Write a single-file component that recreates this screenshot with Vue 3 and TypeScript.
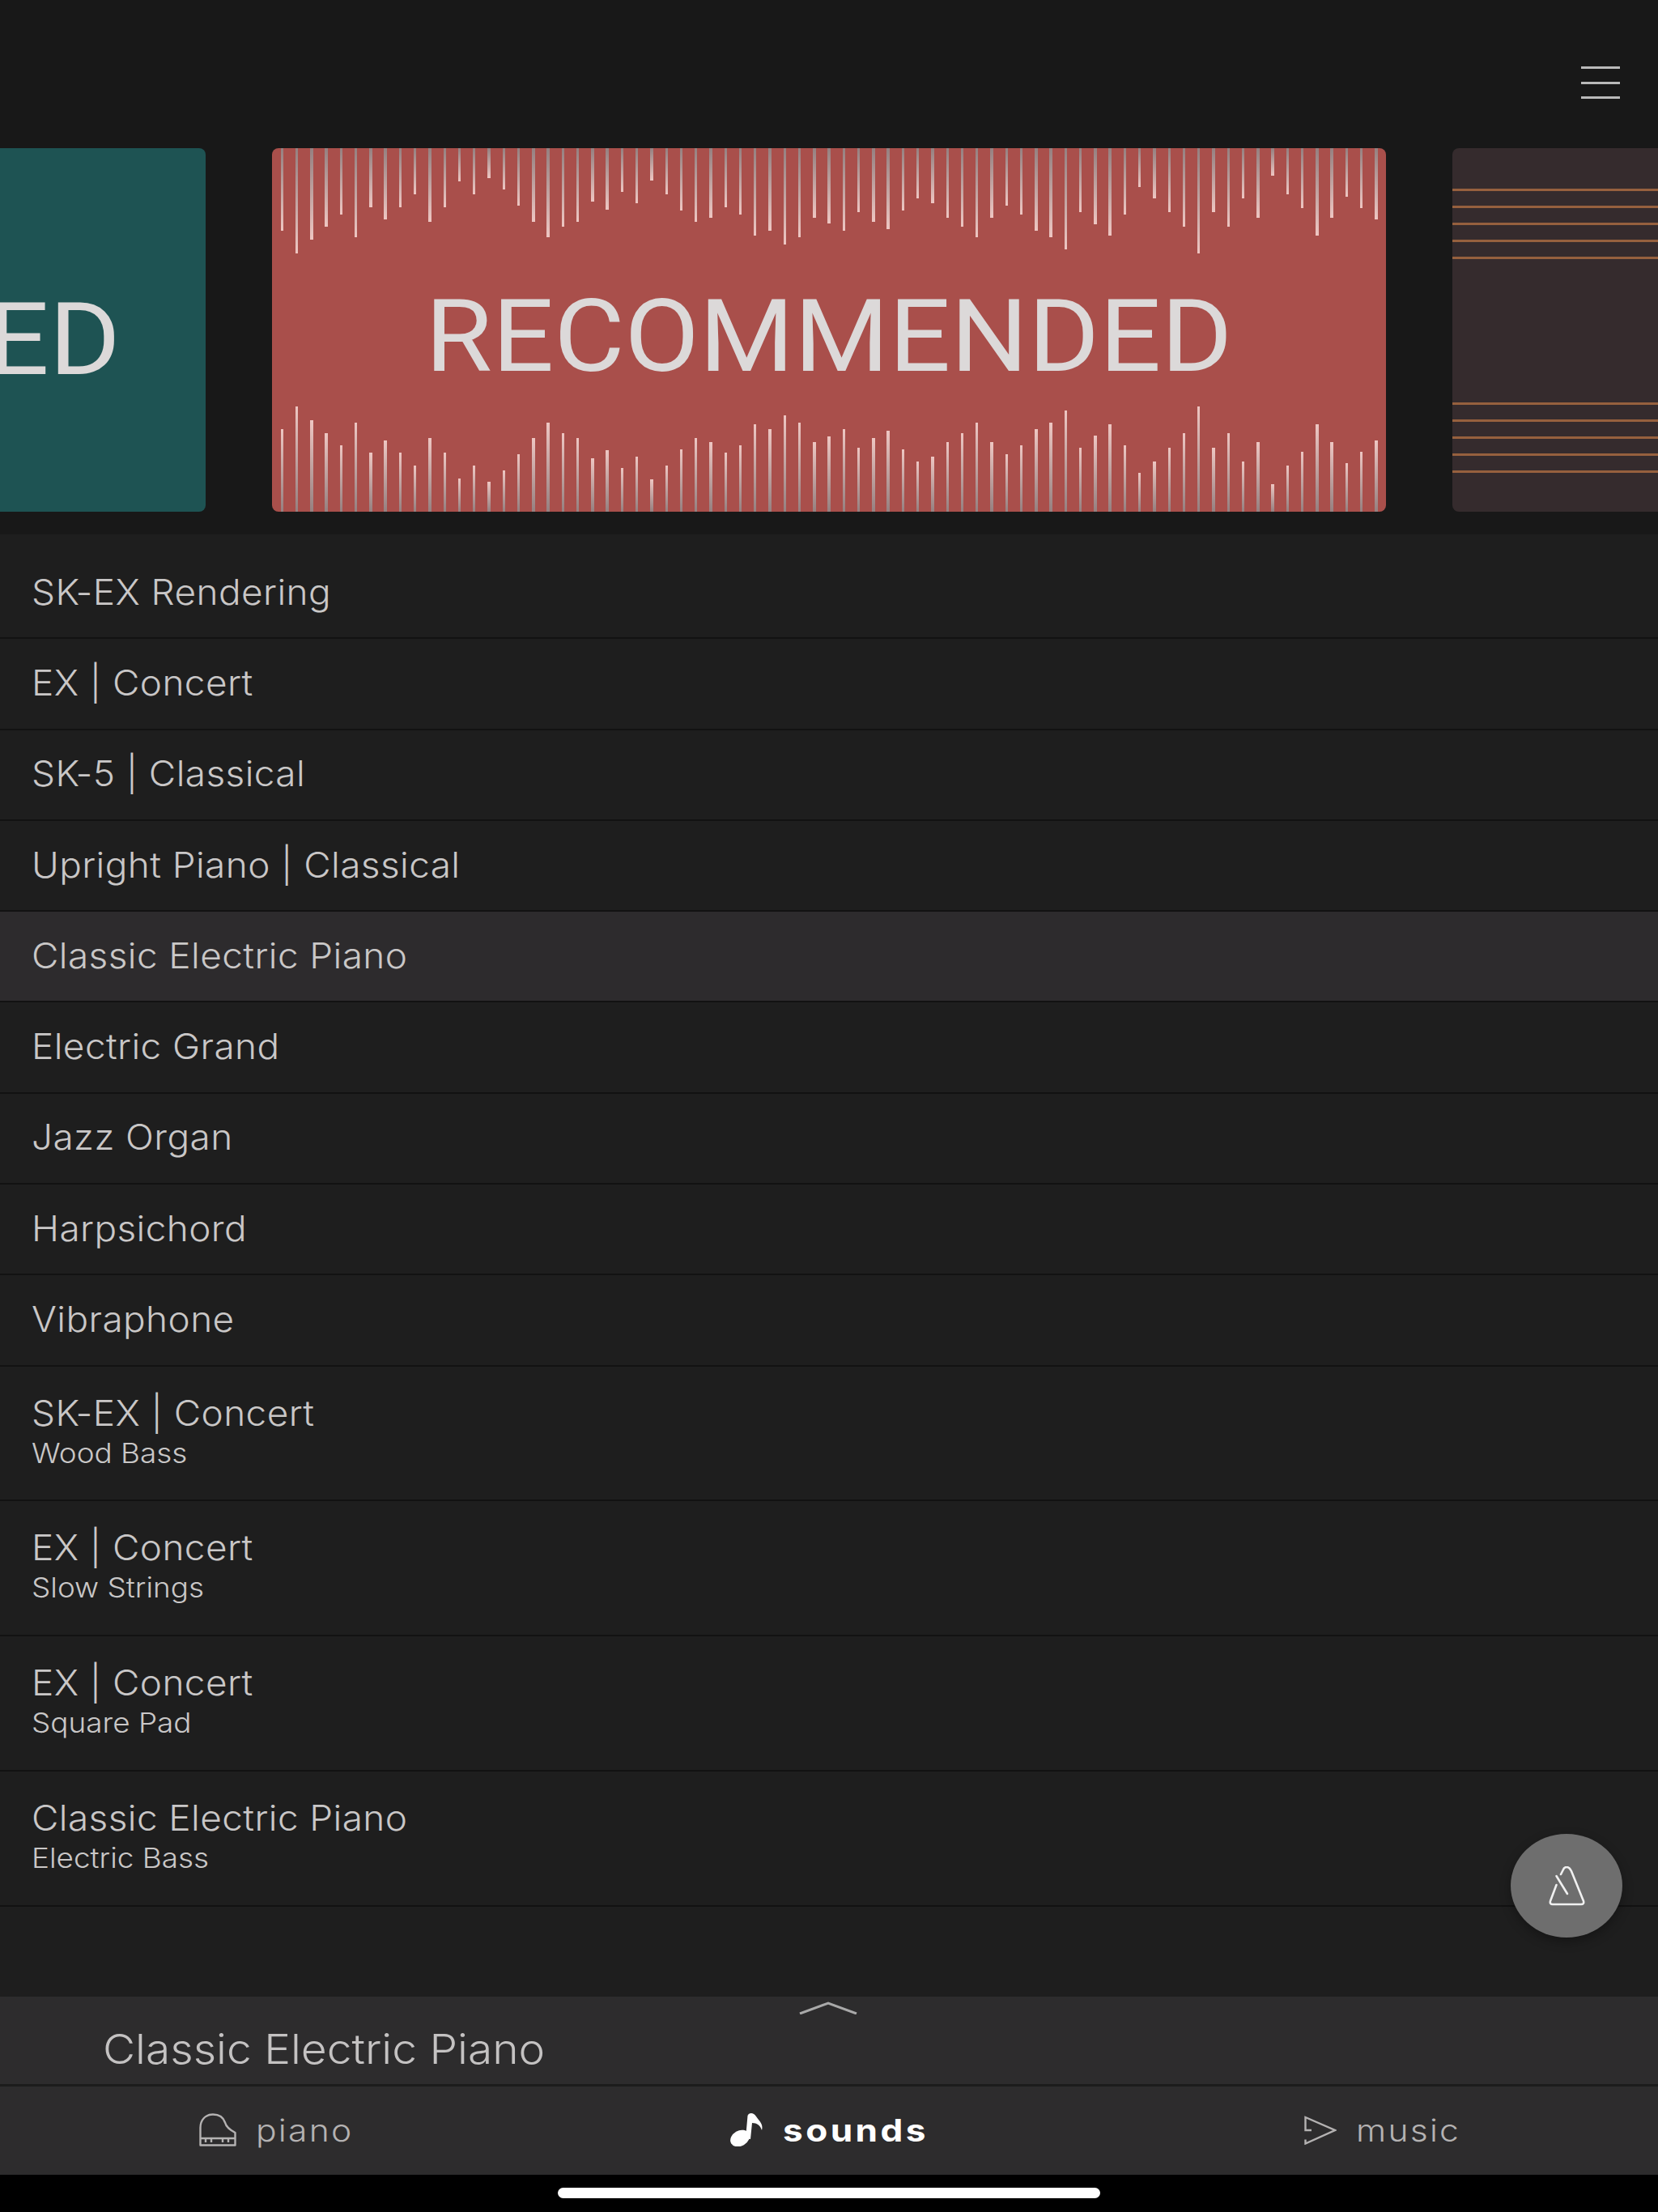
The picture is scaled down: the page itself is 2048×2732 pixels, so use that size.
<script setup lang="ts">
type Row = { title: string; sub?: string; active?: boolean };

const rows: Row[] = [
  { title: "SK-EX Rendering" },
  { title: "EX | Concert" },
  { title: "SK-5 | Classical" },
  { title: "Upright Piano | Classical" },
  { title: "Classic Electric Piano", active: true },
  { title: "Electric Grand" },
  { title: "Jazz Organ" },
  { title: "Harpsichord" },
  { title: "Vibraphone" },
  { title: "SK-EX | Concert", sub: "Wood Bass" },
  { title: "EX | Concert", sub: "Slow Strings" },
  { title: "EX | Concert", sub: "Square Pad" },
  { title: "Classic Electric Piano", sub: "Electric Bass" },
];

// bar lengths in px, read off the waveform, same for top and bottom
const bars = [
  102, 130, 113, 97, 82, 110, 73, 88, 73, 57, 91, 73, 41, 57, 37, 51, 71, 91, 110, 97, 91, 66, 76,
  54, 68, 40, 57, 77, 91, 86, 73, 82, 108, 102, 119, 110, 86, 93, 102, 79, 91, 100, 77, 62, 68, 86,
  97, 110, 86, 71, 82, 102, 110, 125, 79, 94, 108, 82, 48, 62, 79, 97, 130, 79, 97, 62, 86, 34, 57,
  74, 108, 86, 60, 74, 88,
];
</script>

<template>
  <div class="screen">
    <header class="top">
      <button class="menu" aria-label="menu"><i /><i /><i /></button>
    </header>

    <section class="carousel">
      <div class="card teal">
        <span class="label">ED</span>
      </div>
      <div class="card red">
        <div class="bars top-bars">
          <i v-for="(h, n) in bars" :key="n" :style="{ height: h + 'px' }" />
        </div>
        <span class="label">RECOMMENDED</span>
        <div class="bars bottom-bars">
          <i v-for="(h, n) in bars" :key="n" :style="{ height: h + 'px' }" />
        </div>
      </div>
      <div class="card brown">
        <div class="staff"><i v-for="n in 5" :key="n" /></div>
        <div class="staff"><i v-for="n in 5" :key="n" /></div>
      </div>
    </section>

    <main class="list">
      <div v-for="(row, n) in rows" :key="n" class="row" :class="{ active: row.active, tall: row.sub }">
        <div class="title">{{ row.title }}</div>
        <div v-if="row.sub" class="sub">{{ row.sub }}</div>
      </div>
      <button class="fab" aria-label="metronome">
        <svg viewBox="0 0 45 49" width="45" height="49" fill="none" stroke="currentColor" stroke-width="2.6" stroke-linecap="round" stroke-linejoin="round">
          <path d="M9.5 23 2 43q-1 4 3 4h35q4 0 3-4L28 6q-2.500-5-6-5-3 0-4.500 4L15 10" />
          <path d="M9.500 12 23 34" />
        </svg>
      </button>
    </main>

    <footer class="footer">
      <div class="now">
        <svg class="chevron" viewBox="0 0 72 16" width="72" height="16" fill="none" stroke="currentColor" stroke-width="3">
          <path d="M1 15 36 2l35 13" />
        </svg>
        <div class="now-title">Classic Electric Piano</div>
      </div>
      <nav class="tabs">
        <div class="tab">
          <svg viewBox="0 0 46 41" width="46" height="41" fill="none" stroke="currentColor" stroke-width="2.400" stroke-linejoin="round">
            <path d="M1.500 39.500V18C1.500 8 8 1.500 17 1.500c8 0 13 4 15 10 1.500 6 6 9 12.500 12.500v15.500z" />
            <path d="M1.500 31h43M8 31v5M15 31v5M29 31v5M36 31v5" />
          </svg>
          <span>piano</span>
        </div>
        <div class="tab current">
          <svg viewBox="0 0 41 41" width="41" height="41" fill="currentColor">
            <ellipse cx="12" cy="31" rx="12.500" ry="9.500" transform="rotate(-30 12 31)" />
            <path d="M19 31 21.500 3C23-1 29-1 32 4c4 6 9 9 7 17-2-6-6-9-12-9l-2 20z" />
          </svg>
          <span>sounds</span>
        </div>
        <div class="tab">
          <svg viewBox="0 0 40 36" width="40" height="36" fill="none" stroke="currentColor" stroke-width="2.400">
            <path d="M9 18H1.500V2L38 18 1.500 34.500V29.500" />
          </svg>
          <span>music</span>
        </div>
      </nav>
      <div class="home"><i /></div>
    </footer>
  </div>
</template>

<style scoped>
.screen {
  width: 2048px;
  height: 2732px;
  display: flex;
  flex-direction: column;
  background: #181818;
  overflow: hidden;
  font-family: Inter, "Liberation Sans", sans-serif;
}

.top {
  height: 183px;
  flex-shrink: 0;
  display: flex;
  justify-content: flex-end;
  box-sizing: border-box;
  padding: 82px 47px 0 0;
}

.menu {
  width: 48px;
  height: 40px;
  padding: 0;
  border: none;
  background: none;
  display: flex;
  flex-direction: column;
  justify-content: space-between;
}

.menu i {
  display: block;
  height: 3px;
  background: #b9b9b9;
}

.carousel {
  height: 449px;
  flex-shrink: 0;
  display: flex;
  gap: 82px;
  margin-bottom: 28px;
  overflow: hidden;
}

.card {
  flex-shrink: 0;
  height: 449px;
  border-radius: 8px;
  overflow: hidden;
  box-sizing: border-box;
}

.label {
  display: block;
  font-family: Roboto, "Liberation Sans", sans-serif;
  font-size: 124px;
  line-height: 130px;
  color: #dcd9d9;
  white-space: nowrap;
  transform: translateY(8px) scaleX(1.082);
}

.teal {
  width: 254px;
  border-radius: 0 8px 8px 0;
  background: #1e5353;
  display: flex;
  align-items: center;
  justify-content: flex-end;
  padding: 8px 105px 0 0;
}

.teal .label {
  transform-origin: right center;
}

.red {
  width: 1376px;
  background: #a94f4b;
  display: flex;
  flex-direction: column;
  justify-content: space-between;
  align-items: center;
}

.bars {
  align-self: stretch;
  height: 131px;
  display: flex;
  gap: 14.88px;
  padding-left: 10.6px;
}

.bars i {
  display: block;
  width: 3.4px;
  flex-shrink: 0;
}

.top-bars {
  align-items: flex-start;
}

.top-bars i {
  background: linear-gradient(to bottom, #958080, #eec6c2);
}

.bottom-bars {
  align-items: flex-end;
}

.bottom-bars i {
  background: linear-gradient(to top, #958080, #eec6c2);
}

.brown {
  width: 1376px;
  background: #352b2d;
  display: flex;
  flex-direction: column;
  justify-content: space-between;
  padding: 50px 0 48px;
}

.staff {
  display: flex;
  flex-direction: column;
  gap: 18px;
}

.staff i {
  display: block;
  height: 3px;
  background: #96603e;
}

.list {
  flex: 1;
  position: relative;
  background: #1e1e1e;
  padding-top: 17px;
}

.row {
  height: 112.300px;
  box-sizing: border-box;
  border-bottom: 2px solid #121212;
  padding: 0 0 3px 39px;
  display: flex;
  flex-direction: column;
  justify-content: center;
  color: #c9c7c7;
}

.row.tall {
  height: 166.800px;
  padding-bottom: 8px;
}

.row.active {
  background: #2d2b2d;
}

/* the reference is stretched a little sideways, so the glyphs are too */
.title {
  font-size: 43px;
  font-weight: 300;
  line-height: 56px;
  letter-spacing: 0.4px;
  transform: scaleX(1.067);
  transform-origin: left center;
}

.row.tall .title {
  line-height: 54px;
}

.sub {
  margin-top: 3px;
  font-size: 34px;
  font-weight: 300;
  line-height: 40px;
  transform: scaleX(1.085);
  transform-origin: left center;
}

.fab {
  position: absolute;
  left: 1866px;
  top: 1605px;
  width: 138px;
  height: 128px;
  padding: 0;
  border: none;
  border-radius: 50%;
  background: #6e6e6e;
  color: #f0f0f0;
  box-shadow: 0 5px 14px rgba(0, 0, 0, 0.3);
  display: flex;
  align-items: center;
  justify-content: center;
}

.footer {
  flex-shrink: 0;
  background: #2d2c2d;
}

.now {
  position: relative;
  height: 111px;
  box-sizing: border-box;
  border-bottom: 3px solid #1c1c1c;
  padding: 30px 0 0 127px;
  color: #c4c2c2;
}

.now-title {
  font-size: 51px;
  font-weight: 300;
  line-height: 70px;
  transform: scaleX(1.08);
  transform-origin: left center;
}

.chevron {
  position: absolute;
  left: 987px;
  top: 6px;
  color: #a9a9a9;
}

.tabs {
  height: 109px;
  display: grid;
  grid-template-columns: repeat(3, 1fr);
  padding-bottom: 2px;
  box-sizing: border-box;
}

.tab {
  display: flex;
  align-items: center;
  justify-content: center;
  gap: 24px;
  font-size: 38px;
  font-weight: 300;
  letter-spacing: 2px;
  color: #b4b2b2;
}

.tab span {
  margin-right: 13px;
  transform: scaleX(1.12);
  transform-origin: left center;
}

.tab.current {
  font-weight: 700;
  letter-spacing: 3px;
  color: #fff;
}

.tab.current span {
  margin-right: 24px;
  transform: scaleX(1.16);
}

.home {
  height: 46px;
  background: #000;
  display: flex;
  justify-content: center;
  padding-top: 16px;
  box-sizing: border-box;
}

.home i {
  display: block;
  width: 670px;
  height: 13px;
  border-radius: 7px;
  background: #fff;
}
</style>
